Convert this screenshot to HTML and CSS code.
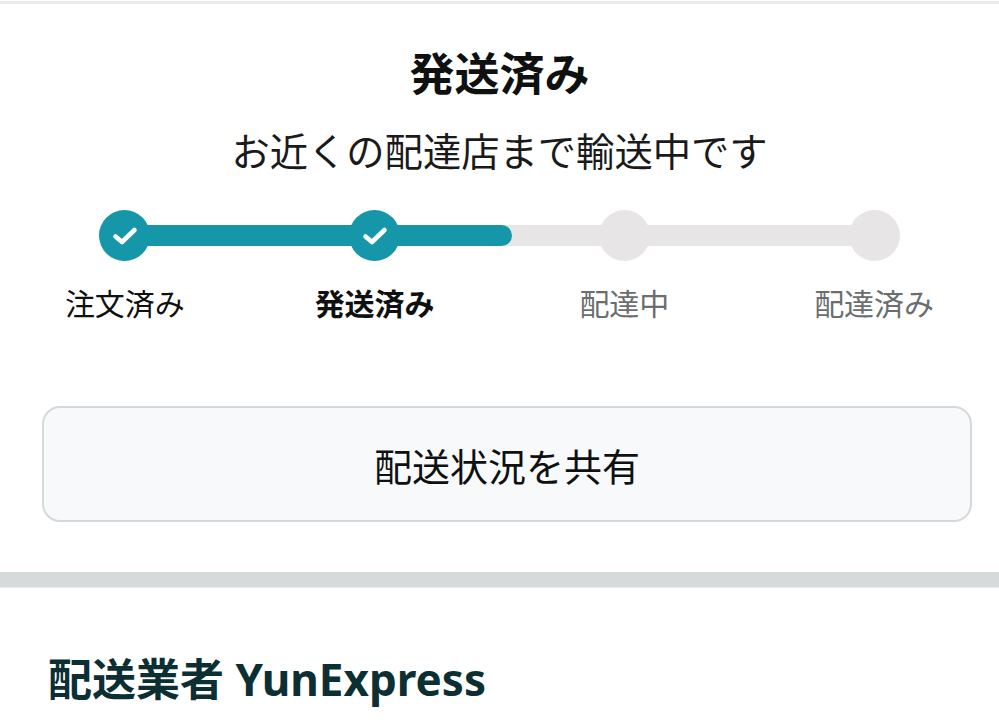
FILE: index.html
```html
<!DOCTYPE html>
<html lang="ja">
<head>
  <meta charset="UTF-8" />
  <meta name="viewport" content="width=device-width, initial-scale=1" />
  <title>配送状況</title>
  <link rel="stylesheet" href="styles.css">
</head>
<body>
  <div class="top-rule"></div>

  <section class="status">
    <h1 class="status-title">発送済み</h1>
    <p class="status-sub">お近くの配達店まで輸送中です</p>

    <div class="tracker">
      <div class="track"><div class="track-fill"></div></div>

      <div class="step done">
        <span class="dot">
          <svg viewBox="0 0 32 32" width="32" height="32"><polyline points="6.5,16.5 13,22 25.5,10" /></svg>
        </span>
        <span class="label">注文済み</span>
      </div>
      <div class="step done current">
        <span class="dot">
          <svg viewBox="0 0 32 32" width="32" height="32"><polyline points="6.5,16.5 13,22 25.5,10" /></svg>
        </span>
        <span class="label">発送済み</span>
      </div>
      <div class="step">
        <span class="dot"></span>
        <span class="label">配達中</span>
      </div>
      <div class="step">
        <span class="dot"></span>
        <span class="label">配達済み</span>
      </div>
    </div>

    <button class="share-btn" type="button">配送状況を共有</button>
  </section>

  <div class="divider"></div>

  <section class="carrier">
    <h2>配送業者 YunExpress</h2>
  </section>
</body>
</html>
```

FILE: styles.css
```css
body {
  margin: 0;
  padding: 0;
  font-family: "Noto Sans", "Noto Sans CJK JP", sans-serif;
  background: #fff;
  color: #0f1111;
  overflow: hidden;
}

.top-rule {
  margin-top: 1px;
  height: 3px;
  background: #e9e9e9;
}

.status {
  padding-top: 40px;
}

.status-title {
  margin: 0;
  text-align: center;
  font-size: 45px;
  line-height: 60px;
  font-weight: 700;
}

.status-sub {
  margin: 19px 0 0;
  text-align: center;
  font-size: 38.3px;
  line-height: 56px;
  color: #1a1a1a;
}

.tracker {
  position: relative;
  margin-top: 31px;
  display: grid;
  grid-template-columns: repeat(4, 1fr);
}

.track {
  position: absolute;
  top: 15px;
  left: 12.5%;
  right: 12.5%;
  height: 21px;
  background: #e7e5e6;
}

.track-fill {
  width: 51.7%;
  height: 100%;
  background: #1596a9;
  border-radius: 0 11px 11px 0;
}

.step {
  position: relative;
  display: flex;
  flex-direction: column;
  align-items: center;
}

.dot {
  width: 51px;
  height: 51px;
  border-radius: 50%;
  background: #e7e5e6;
  display: flex;
  align-items: center;
  justify-content: center;
}

.step.done .dot {
  background: #1596a9;
}

.dot svg polyline {
  fill: none;
  stroke: #fff;
  stroke-width: 4.6;
  stroke-linecap: round;
  stroke-linejoin: round;
}

.label {
  margin-top: 21px;
  font-size: 30px;
  line-height: 44px;
  color: #6a6e6e;
}

.step.done .label {
  color: #0f1111;
}

.step.current .label {
  font-weight: 700;
}

.share-btn {
  display: block;
  box-sizing: border-box;
  width: 930px;
  height: 116px;
  margin: 80px 0 0 42px;
  border: 2px solid #d5d9d9;
  border-radius: 18px;
  background: #f7f9fa;
  font-family: inherit;
  font-size: 38px;
  color: #0f1111;
  padding: 0;
}

.divider {
  margin-top: 50px;
  height: 15px;
  background: #d5dbdb;
  border-bottom: 1px solid #e9eded;
}

.carrier {
  padding: 0 48px;
}

.carrier h2 {
  margin: 61px 0 0;
  font-size: 44px;
  line-height: 60px;
  font-weight: 700;
  color: #0b2f33;
}
```
